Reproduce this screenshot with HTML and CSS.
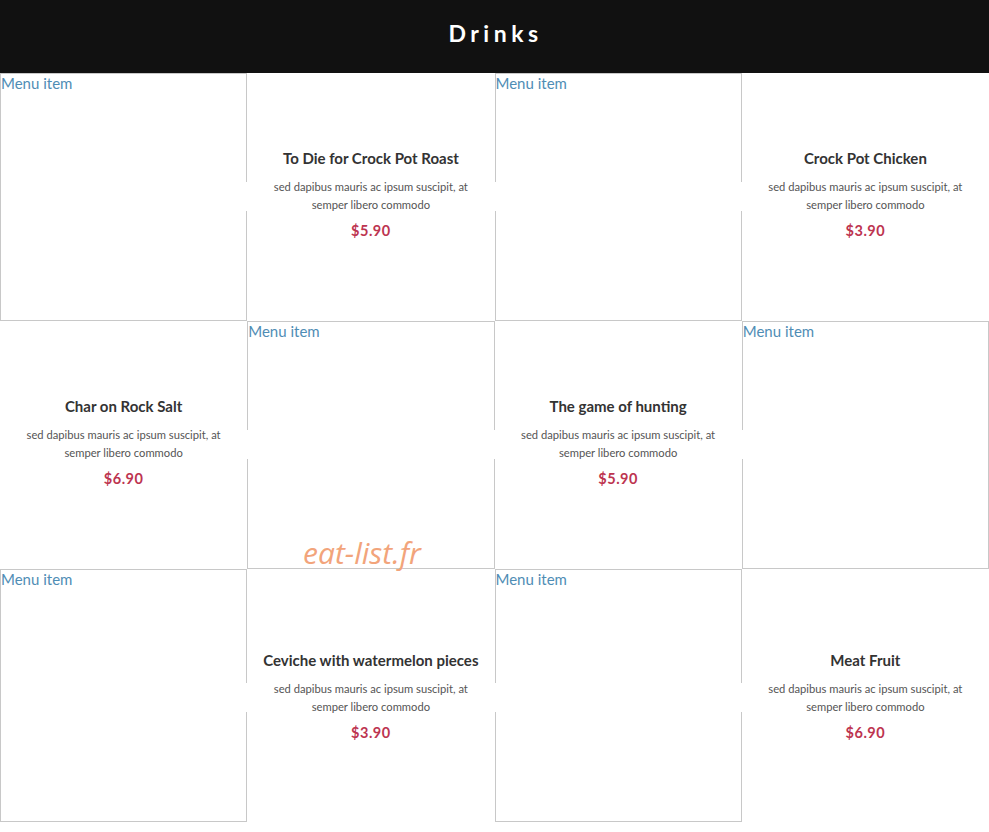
FILE: index.html
```html
<!DOCTYPE html>
<html lang="en">
<head>
    <meta charset="UTF-8">
    <meta name="viewport" content="width=device-width, initial-scale=1.0">
    <title>Drinks</title>
    <link rel="stylesheet" href="styles.css">
</head>
<body>
    <header class="top">
        <h1>Drinks</h1>
    </header>
    <div class="menu">
        <!-- row 1 -->
        <div class="cell pic"><span class="alt">Menu item</span></div>
        <div class="cell item">
            <h3>To Die for Crock Pot Roast</h3>
            <p class="desc">sed dapibus mauris ac ipsum suscipit, at<br>semper libero commodo</p>
            <span class="price">$5.90</span>
        </div>
        <div class="cell pic"><span class="alt">Menu item</span></div>
        <div class="cell item">
            <h3>Crock Pot Chicken</h3>
            <p class="desc">sed dapibus mauris ac ipsum suscipit, at<br>semper libero commodo</p>
            <span class="price">$3.90</span>
        </div>

        <!-- row 2 -->
        <div class="cell item">
            <h3>Char on Rock Salt</h3>
            <p class="desc">sed dapibus mauris ac ipsum suscipit, at<br>semper libero commodo</p>
            <span class="price">$6.90</span>
        </div>
        <div class="cell pic"><span class="alt">Menu item</span></div>
        <div class="cell item">
            <h3>The game of hunting</h3>
            <p class="desc">sed dapibus mauris ac ipsum suscipit, at<br>semper libero commodo</p>
            <span class="price">$5.90</span>
        </div>
        <div class="cell pic"><span class="alt">Menu item</span></div>

        <!-- row 3 -->
        <div class="cell pic"><span class="alt">Menu item</span></div>
        <div class="cell item item-low">
            <h3>Ceviche with watermelon pieces</h3>
            <p class="desc">sed dapibus mauris ac ipsum suscipit, at<br>semper libero commodo</p>
            <span class="price">$3.90</span>
        </div>
        <div class="cell pic"><span class="alt">Menu item</span></div>
        <div class="cell item item-low">
            <h3>Meat Fruit</h3>
            <p class="desc">sed dapibus mauris ac ipsum suscipit, at<br>semper libero commodo</p>
            <span class="price">$6.90</span>
        </div>
    </div>
    <div class="watermark">eat-list.fr</div>
</body>
</html>
```
FILE: styles.css
```css
body {
    margin: 0;
    background-color: #ffffff;
    font-family: Lato, "Open Sans", sans-serif;
    position: relative;
}

.top {
    background-color: #111111;
    height: 73px;
    box-sizing: border-box;
    padding-bottom: 7px;
    display: flex;
    justify-content: center;
    align-items: center;
}

.top h1 {
    margin: 0;
    color: #ffffff;
    font-size: 23px;
    font-weight: 700;
    letter-spacing: 4.5px;
    padding-left: 2px;
}

.menu {
    display: grid;
    grid-template-columns: repeat(4, 1fr);
    grid-template-rows: 248px 248px 253px;
}

.cell {
    box-sizing: border-box;
    position: relative;
}

.pic {
    border: 1px solid #c8c8c8;
    background-color: #ffffff;
}

.alt {
    display: block;
    color: #4f8db5;
    font-size: 15px;
    line-height: 18px;
}

.item {
    display: flex;
    flex-direction: column;
    justify-content: center;
    align-items: center;
    text-align: center;
    z-index: 1;
    padding-bottom: 6px;
}

.item-low {
    padding-bottom: 0;
}

.item h3 {
    margin: 0 0 11px;
    color: #333333;
    font-size: 15px;
    font-weight: 700;
}

.desc {
    margin: 0 -3px 8px;
    align-self: stretch;
    color: #555555;
    font-size: 11.2px;
    line-height: 18px;
    background: linear-gradient(#ffffff, #ffffff) center / 100% 29px no-repeat;
}

.price {
    color: #bd3450;
    font-size: 14.5px;
    font-weight: 700;
    letter-spacing: 0.5px;
}

.watermark {
    position: absolute;
    left: 303px;
    top: 532px;
    color: #f2a47b;
    font-family: "Open Sans", sans-serif;
    font-style: italic;
    font-size: 30px;
    z-index: 2;
}
```
